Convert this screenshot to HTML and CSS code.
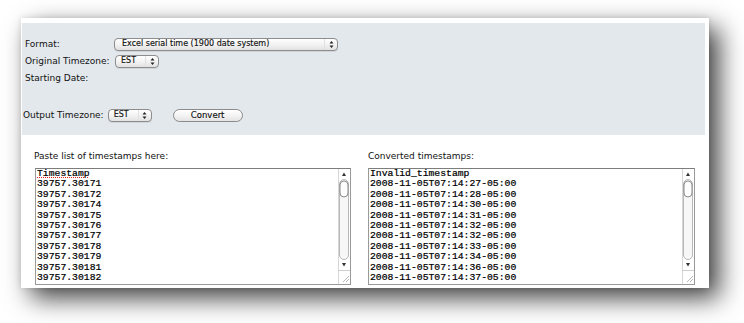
FILE: index.html
```html
<!DOCTYPE html>
<html>
<head>
<meta charset="utf-8">
<title>Timestamp converter</title>
<link rel="stylesheet" href="styles.css">
</head>
<body>
<div class="card">
  <div class="panel">
    <div class="row">
      <span class="lbl">Format:</span>
      <div class="sel sel-wide"><span class="sel-text">Excel serial time (1900 date system)</span><span class="sel-arr"><svg width="5" height="9" viewBox="0 0 5 9"><path d="M0.5 3.6H4.5L2.5 1Z M0.5 5.4H4.5L2.5 8Z" fill="#222"/></svg></span></div>
    </div>
    <div class="row">
      <span class="lbl">Original Timezone:</span>
      <div class="sel sel-tz sel-orig"><span class="sel-text">EST</span><span class="sel-arr"><svg width="5" height="9" viewBox="0 0 5 9"><path d="M0.5 3.6H4.5L2.5 1Z M0.5 5.4H4.5L2.5 8Z" fill="#222"/></svg></span></div>
    </div>
    <div class="row">
      <span class="lbl">Starting Date:</span>
    </div>
    <div class="row row-out">
      <span class="lbl-out">Output Timezone:</span>
      <div class="sel sel-tz"><span class="sel-text">EST</span><span class="sel-arr"><svg width="5" height="9" viewBox="0 0 5 9"><path d="M0.5 3.6H4.5L2.5 1Z M0.5 5.4H4.5L2.5 8Z" fill="#222"/></svg></span></div>
      <div class="btn">Convert</div>
    </div>
  </div>
  <div class="cols">
    <div class="col">
      <div class="col-lbl">Paste list of timestamps here:</div>
      <div class="ta ta-left">
        <div class="ta-text"><span class="spell">Timestamp</span>
39757.30171
39757.30172
39757.30174
39757.30175
39757.30176
39757.30177
39757.30178
39757.30179
39757.30181
39757.30182</div>
        <svg class="sb" width="12" height="115" viewBox="0 0 12 115">
          <rect x="0" y="0" width="12" height="115" fill="#fff"/>
          <line x1="0.5" y1="0" x2="0.5" y2="115" stroke="#d6d6d6"/>
          <path d="M4 7H8L6 3.5Z" fill="#333"/>
          <rect x="1.5" y="10.5" width="9" height="80" rx="4.5" fill="#f7f7f7" stroke="#b8b8b8"/>
          <rect x="2" y="12" width="8" height="16" rx="4" fill="#fdfdfd" stroke="#8c8c8c"/>
          <path d="M4 94H8L6 97.5Z" fill="#333"/>
          <line x1="0" y1="101.5" x2="12" y2="101.5" stroke="#cfcfcf"/>
          <path d="M5 113L11 107M8 113L11 110" stroke="#a8a8a8" stroke-width="0.8"/>
        </svg>
      </div>
    </div>
    <div class="col">
      <div class="col-lbl">Converted timestamps:</div>
      <div class="ta ta-right">
        <div class="ta-text">Invalid_timestamp
2008-11-05T07:14:27-05:00
2008-11-05T07:14:28-05:00
2008-11-05T07:14:30-05:00
2008-11-05T07:14:31-05:00
2008-11-05T07:14:32-05:00
2008-11-05T07:14:32-05:00
2008-11-05T07:14:33-05:00
2008-11-05T07:14:34-05:00
2008-11-05T07:14:36-05:00
2008-11-05T07:14:37-05:00</div>
        <svg class="sb" width="12" height="115" viewBox="0 0 12 115">
          <rect x="0" y="0" width="12" height="115" fill="#fff"/>
          <line x1="0.5" y1="0" x2="0.5" y2="115" stroke="#d6d6d6"/>
          <path d="M4 7H8L6 3.5Z" fill="#333"/>
          <rect x="1.5" y="10.5" width="9" height="80" rx="4.5" fill="#f7f7f7" stroke="#b8b8b8"/>
          <rect x="2" y="12" width="8" height="16" rx="4" fill="#fdfdfd" stroke="#8c8c8c"/>
          <path d="M4 94H8L6 97.5Z" fill="#333"/>
          <line x1="0" y1="101.5" x2="12" y2="101.5" stroke="#cfcfcf"/>
          <path d="M5 113L11 107M8 113L11 110" stroke="#a8a8a8" stroke-width="0.8"/>
        </svg>
      </div>
    </div>
  </div>
</div>
</body>
</html>
```

FILE: styles.css
```css
html, body {
  margin: 0;
  padding: 0;
  background: #ffffff;
}
body {
  font-family: "DejaVu Sans", sans-serif;
  font-size: 9px;
  color: #111;
  min-height: 323px;
  padding-top: 18px;
  box-sizing: border-box;
}
.card {
  margin: 0 0 0 21px;
  width: 688px;
  height: 270px;
  box-sizing: border-box;
  background: #fff;
  padding: 5px 4px 0 1px;
  box-shadow: 10px 10px 24px rgba(0, 0, 0, 0.75), 0 0 6px rgba(0, 0, 0, 0.12);
}
.panel {
  background: #e3e8ec;
  height: 112px;
  box-sizing: border-box;
  padding: 13px 0 0 3px;
  display: flex;
  flex-direction: column;
  gap: 1px;
}
.row {
  display: flex;
  align-items: center;
  height: 16px;
}
.lbl {
  width: 89px;
  flex: none;
  line-height: 11px;
}
.row-out {
  margin-top: 20px;
  margin-left: -2px;
}
.lbl-out {
  margin-right: 4px;
  line-height: 11px;
}
.sel {
  height: 13px;
  box-sizing: border-box;
  border: 1px solid #8d8d8d;
  border-radius: 4px;
  background: linear-gradient(#ffffff, #f1f1f1 55%, #e2e2e2);
  display: flex;
  align-items: center;
  font-size: 8px;
  color: #111;
  box-shadow: 0 1px 0 rgba(0, 0, 0, 0.08);
}
.sel-text {
  flex: 1;
  line-height: 10px;
  white-space: nowrap;
  -webkit-text-stroke: 0.15px #111;
}
.sel-wide {
  width: 224px;
  padding-left: 7px;
}
.sel-tz {
  width: 44px;
  padding-left: 5px;
}
.sel-orig {
  margin-left: 1px;
}
.sel-arr {
  width: 12px;
  height: 11px;
  flex: none;
  display: flex;
  align-items: center;
  justify-content: center;
  border-left: 1px solid #e0e0e0;
}
.sel-arr svg {
  display: block;
}
.btn {
  margin-left: 21px;
  width: 70px;
  height: 13px;
  box-sizing: border-box;
  border: 1px solid #8a8a8a;
  border-radius: 7px;
  background: linear-gradient(#ffffff, #f2f2f2 55%, #e3e3e3);
  font-size: 8.5px;
  line-height: 11px;
  text-align: center;
  color: #111;
  -webkit-text-stroke: 0.15px #111;
}
.cols {
  display: grid;
  grid-template-columns: 317px 326px;
  column-gap: 17px;
  padding: 16px 0 0 12px;
}
.col-lbl {
  line-height: 11px;
  height: 11px;
  margin-bottom: 6px;
}
.ta {
  height: 117px;
  box-sizing: border-box;
  border: 1px solid #9a9a9a;
  border-top-color: #7d7d7d;
  display: flex;
  background: #fff;
  overflow: hidden;
}
.ta-left {
  margin-left: 1px;
  width: 316px;
}
.ta-right {
  width: 327px;
}
.ta-text {
  flex: 1;
  font-family: "Liberation Mono", monospace;
  font-size: 9.75px;
  line-height: 10.4px;
  color: #000;
  white-space: pre;
  padding-left: 1px;
  overflow: hidden;
  -webkit-text-stroke: 0.22px #000;
}
.spell {
  text-decoration: underline dotted #e02020;
  text-decoration-thickness: 1px;
  text-underline-offset: 1px;
}
.sb {
  flex: none;
  display: block;
}
```
